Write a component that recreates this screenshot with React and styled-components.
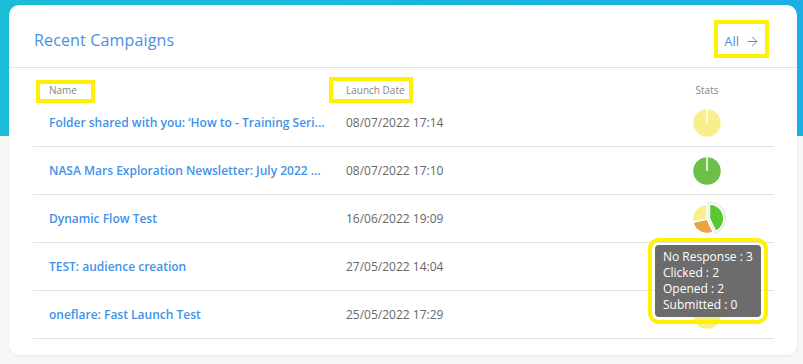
import React from 'react';
import styled, { createGlobalStyle } from 'styled-components';
import { ArrowRight } from 'lucide-react';

const GlobalStyle = createGlobalStyle`
  body {
    margin: 0;
    font-family: 'Open Sans', 'Noto Sans', sans-serif;
  }
`;

const Page = styled.div`
  width: 803px;
  height: 364px;
  box-sizing: border-box;
  padding: 5px 6px 0 9px;
  background:
    linear-gradient(to right, #1bbcd7, #1ab0e5) top / 100% 136px no-repeat,
    #f7f7f7;
  overflow: hidden;
`;

const Card = styled.div`
  height: 350px;
  background: #fff;
  border-radius: 10px;
  box-shadow: 0 1px 3px rgb(0 0 0 / 6%);
`;

const CardHeader = styled.div`
  display: flex;
  align-items: center;
  justify-content: space-between;
  box-sizing: border-box;
  height: 63px;
  padding: 8px 37px 0 25px;
  border-bottom: 1px solid #e2e2e2;
`;

const Title = styled.h2`
  margin: 0;
  font-size: 16px;
  font-weight: 400;
  letter-spacing: 0.15px;
  color: #4a8fe2;
`;

const Highlight = styled.span`
  position: relative;
  display: inline-block;

  &::after {
    content: '';
    position: absolute;
    top: ${(p) => p.$t}px;
    right: ${(p) => p.$r}px;
    bottom: ${(p) => p.$b}px;
    left: ${(p) => p.$l}px;
    border: 4px solid #fff200;
  }
`;

const AllLink = styled.a`
  display: inline-flex;
  align-items: center;
  gap: 6px;
  height: 18px;
  font-size: 13px;
  color: #4a8fe2;
  text-decoration: none;
`;

const Table = styled.div`
  padding: 0 23px 0 24px;
`;

const Row = styled.div`
  display: grid;
  grid-template-columns: 297px 310px 1fr;
  align-items: center;
  height: 47px;
  border-bottom: 1px solid #e2e2e2;
`;

const HeadRow = styled(Row)`
  height: 31px;
  align-items: end;
  padding-bottom: 1px;
  box-sizing: border-box;
  border-bottom: 0;
`;

const HeadLabel = styled.div`
  padding-left: ${(p) => (p.$center ? 0 : 16)}px;
  text-align: ${(p) => (p.$center ? 'center' : 'left')};
  font-size: 10px;
  line-height: 15px;
  color: #858585;
`;

const NameCell = styled.div`
  min-width: 0;
  padding: 0 3px 0 16px;
  white-space: nowrap;
  overflow: hidden;
  text-overflow: ellipsis;
  font-size: 12px;
  font-weight: 600;
  color: #3f92ea;
`;

const DateCell = styled.div`
  padding-left: 16px;
  font-size: 12px;
  color: #666;
`;

const StatsCell = styled.div`
  position: relative;
  align-self: stretch;
  display: flex;
  align-items: center;
  justify-content: center;
`;

const PieSvg = styled.svg`
  width: 32px;
  height: 32px;
  overflow: visible;
`;

const Tooltip = styled.div`
  position: absolute;
  z-index: 2;
  top: 50px;
  left: 15px;
  width: 106px;
  height: 72px;
  box-sizing: border-box;
  padding: 4px 0 0 8px;
  border-radius: 4px;
  background: #6c6c6c;
  outline: 4px solid #fff200;
  outline-offset: 3px;
  color: #fff;
  font-size: 12px;
  line-height: 16px;
  white-space: nowrap;
`;

const point = (a, r) => {
  const rad = ((a - 90) * Math.PI) / 180;
  return [16 + r * Math.cos(rad), 16 + r * Math.sin(rad)];
};

const slicePath = (a0, a1, r = 14.5) => {
  if (a1 - a0 >= 360) {
    return `M16 16 L16 ${16 - r} A${r} ${r} 0 1 1 16 ${16 + r} A${r} ${r} 0 1 1 16 ${16 - r} Z`;
  }
  const [x0, y0] = point(a0, r);
  const [x1, y1] = point(a1, r);
  return `M16 16 L${x0} ${y0} A${r} ${r} 0 ${a1 - a0 > 180 ? 1 : 0} 1 ${x1} ${y1} Z`;
};

const Pie = ({ slices }) => {
  const total = slices.reduce((s, x) => s + x.value, 0);
  let start = 0;
  return (
    <PieSvg viewBox='0 0 32 32'>
      {slices.map((s, i) => {
        const a0 = start;
        const a1 = total ? start + (s.value / total) * 360 : 360;
        start = a1;
        const d = slicePath(a0, a1);
        if (!s.hover) {
          return <path key={i} d={d} fill={s.color} stroke='#fff' strokeWidth='1.5' />;
        }
        const [dx, dy] = point((a0 + a1) / 2, 2.5).map((v) => v - 16);
        return (
          <g key={i} transform={`translate(${dx} ${dy})`}>
            <path d={d} fill='none' stroke='rgb(0 0 0 / 10%)' strokeWidth='4' />
            <path d={d} fill={s.color} stroke='#fff' strokeWidth='1.5' />
          </g>
        );
      })}
    </PieSvg>
  );
};

const yellow = [{ value: 1, color: '#f8ee8c' }];
const green = [{ value: 1, color: '#6cc04a' }];

const campaigns = [
  { name: 'Folder shared with you: ‘How to - Training Series’', date: '08/07/2022 17:14', pie: yellow },
  { name: 'NASA Mars Exploration Newsletter: July 2022 Edition', date: '08/07/2022 17:10', pie: green },
  {
    name: 'Dynamic Flow Test',
    date: '16/06/2022 19:09',
    pie: [
      { value: 3, color: '#58c830', hover: true },
      { value: 2, color: '#e8a446' },
      { value: 2, color: '#f8ee8c' },
    ],
    tooltip: ['No Response : 3', 'Clicked : 2', 'Opened : 2', 'Submitted : 0'],
  },
  { name: 'TEST: audience creation', date: '27/05/2022 14:04', pie: yellow },
  { name: 'oneflare: Fast Launch Test', date: '25/05/2022 17:29', pie: yellow },
];

export default function App() {
  return (
    <>
      <GlobalStyle />
      <Page>
        <Card>
          <CardHeader>
            <Title>Recent Campaigns</Title>
            <Highlight $t={-9} $r={-9} $b={-7} $l={-10}>
              <AllLink href='#'>
                All <ArrowRight size={15} strokeWidth={1.6} />
              </AllLink>
            </Highlight>
          </CardHeader>
          <Table>
            <HeadRow>
              <HeadLabel>
                <Highlight $t={-3} $r={-18} $b={-5} $l={-13}>Name</Highlight>
              </HeadLabel>
              <HeadLabel>
                <Highlight $t={-6} $r={-8} $b={-5} $l={-17}>Launch Date</Highlight>
              </HeadLabel>
              <HeadLabel $center>Stats</HeadLabel>
            </HeadRow>
            {campaigns.map((c) => (
              <Row key={c.name}>
                <NameCell>{c.name}</NameCell>
                <DateCell>{c.date}</DateCell>
                <StatsCell>
                  <Pie slices={c.pie} />
                  {c.tooltip && (
                    <Tooltip>
                      {c.tooltip.map((t) => (
                        <div key={t}>{t}</div>
                      ))}
                    </Tooltip>
                  )}
                </StatsCell>
              </Row>
            ))}
          </Table>
        </Card>
      </Page>
    </>
  );
}
